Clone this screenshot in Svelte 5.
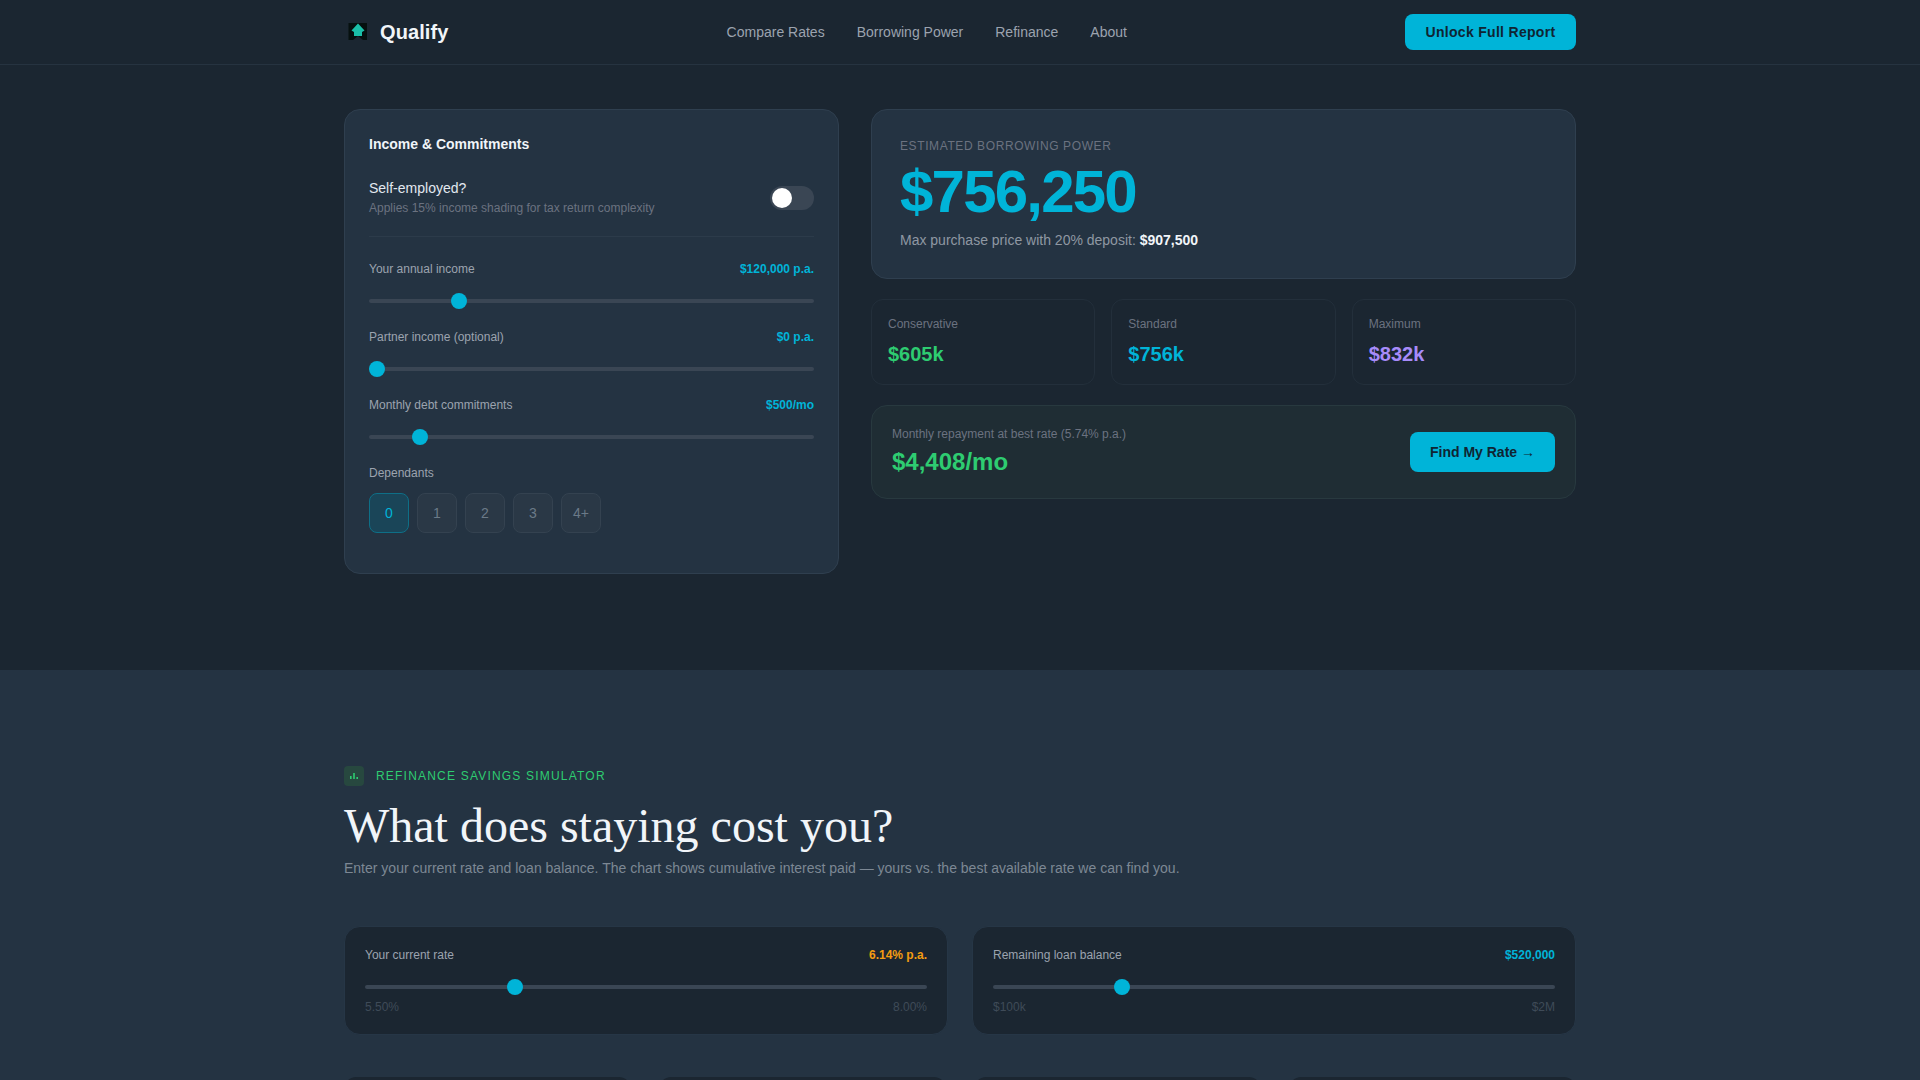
<script>
    let selfEmployed = $state(false);
    let income = $state(120000);
    let partner = $state(0);
    let debt = $state(500);
    let dependants = $state(0);
    let rate = $state(6.14);
    let balance = $state(520000);

    const money = (n) => "$" + Number(n).toLocaleString("en-US");
    const navLinks = ["Compare Rates", "Borrowing Power", "Refinance", "About"];
    const scenarios = [
        { label: "Conservative", value: "$605k", tone: "green" },
        { label: "Standard", value: "$756k", tone: "cyan" },
        { label: "Maximum", value: "$832k", tone: "purple" }
    ];
    const depOptions = ["0", "1", "2", "3", "4+"];
</script>

<div class="page">
    <header class="nav">
        <div class="nav-inner">
            <div class="logo">
                <svg width="28" height="28" viewBox="0 0 28 28">
                    <path d="M4.500 5H23v17h-4l-5-4-5 4H4.500z" fill="#06100f"/>
                    <path d="M14 5.500l6.500 7-2.500 1.500v4h-8v-4l-2.500-1.500z" fill="#1abfa8"/>
                </svg>
                <span>Qualify</span>
            </div>
            <nav class="links">
                {#each navLinks as link}
                    <a href="#top">{link}</a>
                {/each}
            </nav>
            <button class="btn nav-btn">Unlock Full Report</button>
        </div>
    </header>

    <section class="hero">
        <div class="hero-grid">
            <div class="card form-card">
                <h3>Income &amp; Commitments</h3>

                <div class="toggle-row">
                    <div>
                        <div class="toggle-title">Self-employed?</div>
                        <div class="toggle-sub">Applies 15% income shading for tax return complexity</div>
                    </div>
                    <button class="toggle" class:on={selfEmployed} aria-label="Self-employed" onclick={() => (selfEmployed = !selfEmployed)}>
                        <span class="knob"></span>
                    </button>
                </div>

                <div class="field">
                    <div class="field-head"><span>Your annual income</span><b>{money(income)} p.a.</b></div>
                    <input type="range" min="30000" max="500000" step="1000" bind:value={income} />
                </div>
                <div class="field">
                    <div class="field-head"><span>Partner income (optional)</span><b>{money(partner)} p.a.</b></div>
                    <input type="range" min="0" max="300000" step="1000" bind:value={partner} />
                </div>
                <div class="field">
                    <div class="field-head"><span>Monthly debt commitments</span><b>{money(debt)}/mo</b></div>
                    <input type="range" min="0" max="5000" step="50" bind:value={debt} />
                </div>

                <div class="dep-label">Dependants</div>
                <div class="dep-row">
                    {#each depOptions as opt, i}
                        <button class="dep" class:active={dependants === i} onclick={() => (dependants = i)}>{opt}</button>
                    {/each}
                </div>
            </div>

            <div class="results">
                <div class="card power-card">
                    <div class="power-label">ESTIMATED BORROWING POWER</div>
                    <div class="power-value">$756,250</div>
                    <div class="power-sub">Max purchase price with 20% deposit: <strong>$907,500</strong></div>
                </div>

                <div class="scenarios">
                    {#each scenarios as s}
                        <div class="scenario">
                            <div class="scenario-label">{s.label}</div>
                            <div class="scenario-value {s.tone}">{s.value}</div>
                        </div>
                    {/each}
                </div>

                <div class="repay">
                    <div>
                        <div class="repay-label">Monthly repayment at best rate (5.74% p.a.)</div>
                        <div class="repay-value">$4,408/mo</div>
                    </div>
                    <button class="btn repay-btn">Find My Rate →</button>
                </div>
            </div>
        </div>
    </section>

    <section class="refi">
        <div class="refi-inner">
            <div class="eyebrow">
                <span class="eyebrow-icon">
                    <svg width="10" height="10" viewBox="0 0 10 10" fill="#2ecc71">
                        <rect x="1" y="5" width="1.600" height="3"/>
                        <rect x="4.200" y="2" width="1.600" height="6"/>
                        <rect x="7.400" y="6" width="1.600" height="2"/>
                    </svg>
                </span>
                REFINANCE SAVINGS SIMULATOR
            </div>
            <h2>What does staying cost you?</h2>
            <p class="lede">Enter your current rate and loan balance. The chart shows cumulative interest paid — yours vs. the best available rate we can find you.</p>

            <div class="sim-grid">
                <div class="sim-card">
                    <div class="field-head"><span>Your current rate</span><b class="amber">{Number(rate).toFixed(2)}% p.a.</b></div>
                    <input type="range" min="5.5" max="8" step="0.05" value={rate} oninput={(e) => (rate = +e.currentTarget.value)} />
                    <div class="range-ends"><span>5.50%</span><span>8.00%</span></div>
                </div>
                <div class="sim-card">
                    <div class="field-head"><span>Remaining loan balance</span><b>{money(balance)}</b></div>
                    <input type="range" min="100000" max="2000000" step="10000" bind:value={balance} />
                    <div class="range-ends"><span>$100k</span><span>$2M</span></div>
                </div>
            </div>

            <div class="stat-grid">
                <div class="stat"></div>
                <div class="stat"></div>
                <div class="stat"></div>
                <div class="stat"></div>
            </div>
        </div>
    </section>
</div>

<style>
    :global(body) {
        margin: 0;
        background: #1b2631;
        font-family: "Liberation Sans", Arial, sans-serif;
    }

    .page {
        color: #f1f5f9;
    }

    .nav {
        height: 64px;
        border-bottom: 1px solid #263340;
        background: #1b2631;
    }

    .nav-inner {
        max-width: 1232px;
        height: 100%;
        margin: 0 auto;
        display: flex;
        align-items: center;
        justify-content: space-between;
    }

    .logo {
        display: flex;
        align-items: center;
        gap: 8px;
        font-size: 20px;
        font-weight: 700;
        letter-spacing: 0.1px;
        color: #f1f5f9;
    }

    .links {
        display: flex;
        gap: 32px;
    }

    .links a {
        font-size: 14px;
        color: #9ca3af;
        text-decoration: none;
    }

    .btn {
        border: none;
        background: #00b4d8;
        color: #0f2533;
        font-family: inherit;
        font-weight: 700;
        font-size: 14px;
        cursor: pointer;
        border-radius: 8px;
    }

    .nav-btn {
        width: 171px;
        height: 36px;
        letter-spacing: 0.3px;
    }

    .hero {
        padding: 44px 0 96px;
    }

    .hero-grid {
        max-width: 1232px;
        margin: 0 auto;
        display: grid;
        grid-template-columns: 495px 1fr;
        gap: 32px;
        align-items: start;
    }

    .card {
        background: #243342;
        border: 1px solid #2f3f4f;
        border-radius: 16px;
        box-sizing: border-box;
    }

    .form-card {
        padding: 24px;
        height: 465px;
    }

    h3 {
        margin: 0 0 25px;
        font-size: 14px;
        line-height: 20px;
        font-weight: 700;
        color: #f1f5f9;
    }

    .toggle-row {
        display: flex;
        align-items: center;
        justify-content: space-between;
        padding-bottom: 20px;
        margin-bottom: 24px;
        border-bottom: 1px solid #2c3b4a;
    }

    .toggle-title {
        font-size: 14px;
        line-height: 18px;
        color: #e2e8f0;
    }

    .toggle-sub {
        margin-top: 3px;
        font-size: 12px;
        line-height: 16px;
        color: #6b7280;
    }

    .toggle {
        position: relative;
        width: 44px;
        height: 24px;
        padding: 0;
        border: none;
        border-radius: 12px;
        background: #3a4654;
        cursor: pointer;
    }

    .toggle.on {
        background: #00b4d8;
    }

    .knob {
        position: absolute;
        top: 2px;
        left: 2px;
        width: 20px;
        height: 20px;
        border-radius: 50%;
        background: #fff;
    }

    .toggle.on .knob {
        left: 22px;
    }

    .field {
        margin-bottom: 20px;
    }

    .field-head {
        display: flex;
        justify-content: space-between;
        align-items: center;
        font-size: 12px;
        line-height: 16px;
        color: #9ca3af;
    }

    .field-head b {
        color: #00b4d8;
        font-weight: 700;
    }

    .field-head b.amber {
        color: #f39c12;
    }

    input[type="range"] {
        display: block;
        width: 100%;
        height: 16px;
        margin: 16px 0 0;
        appearance: none;
        -webkit-appearance: none;
        background: transparent;
        cursor: pointer;
    }

    input[type="range"]::-webkit-slider-runnable-track {
        height: 4px;
        border-radius: 2px;
        background: #3a4654;
    }

    input[type="range"]::-webkit-slider-thumb {
        -webkit-appearance: none;
        width: 16px;
        height: 16px;
        margin-top: -6px;
        border-radius: 50%;
        background: #00b4d8;
    }

    .dep-label {
        margin-bottom: 12px;
        font-size: 12px;
        line-height: 16px;
        color: #9ca3af;
    }

    .dep-row {
        display: flex;
        gap: 8px;
    }

    .dep {
        width: 40px;
        height: 40px;
        padding: 0;
        border: 1px solid #344250;
        border-radius: 8px;
        background: #2a3846;
        color: #6b7a88;
        font-family: inherit;
        font-size: 14px;
        cursor: pointer;
    }

    .dep.active {
        border-color: #0e6f87;
        background: #1a4558;
        color: #00b4d8;
    }

    .results {
        display: flex;
        flex-direction: column;
        gap: 20px;
    }

    .power-card {
        height: 170px;
        padding: 28px;
    }

    .power-label {
        font-size: 12px;
        line-height: 16px;
        letter-spacing: 0.6px;
        color: #6b7280;
    }

    .power-value {
        margin-top: 5px;
        font-size: 60px;
        line-height: 66px;
        font-weight: 700;
        letter-spacing: -0.03em;
        color: #00b4d8;
    }

    .power-sub {
        margin-top: 5px;
        font-size: 14px;
        line-height: 20px;
        color: #8f98a3;
    }

    .power-sub strong {
        color: #f1f5f9;
    }

    .scenarios {
        display: grid;
        grid-template-columns: repeat(3, 1fr);
        gap: 16px;
    }

    .scenario {
        height: 86px;
        box-sizing: border-box;
        padding: 16px;
        border: 1px solid #232f3b;
        border-radius: 12px;
        background: #1b2631;
    }

    .scenario-label {
        font-size: 12px;
        line-height: 16px;
        color: #6b7280;
    }

    .scenario-value {
        margin-top: 8px;
        font-size: 20px;
        line-height: 28px;
        font-weight: 700;
    }

    .green { color: #2ecc71; }
    .cyan { color: #00b4d8; }
    .purple { color: #a78bfa; }

    .repay {
        height: 94px;
        box-sizing: border-box;
        padding: 0 20px;
        display: flex;
        align-items: center;
        justify-content: space-between;
        border: 1px solid #28393f;
        border-radius: 16px;
        background: #1f2d34;
    }

    .repay-label {
        font-size: 12px;
        line-height: 16px;
        color: #6b7280;
    }

    .repay-value {
        margin-top: 4px;
        font-size: 24px;
        line-height: 32px;
        font-weight: 700;
        color: #2ecc71;
    }

    .repay-btn {
        width: 145px;
        height: 40px;
    }

    .refi {
        background: #243342;
        padding: 96px 0 64px;
    }

    .refi-inner {
        max-width: 1232px;
        margin: 0 auto;
    }

    .eyebrow {
        display: flex;
        align-items: center;
        gap: 12px;
        font-size: 12px;
        line-height: 20px;
        letter-spacing: 1.2px;
        color: #2ecc71;
    }

    .eyebrow-icon {
        width: 20px;
        height: 20px;
        display: flex;
        align-items: center;
        justify-content: center;
        border-radius: 4px;
        background: #27483f;
    }

    h2 {
        margin: 12px 0 4px;
        font-family: "Liberation Serif", "Times New Roman", serif;
        font-size: 48px;
        line-height: 56px;
        font-weight: 400;
        color: #f1f5f9;
    }

    .lede {
        margin: 0;
        font-size: 14px;
        line-height: 20px;
        color: #7d8894;
    }

    .sim-grid {
        margin-top: 48px;
        display: grid;
        grid-template-columns: 1fr 1fr;
        gap: 24px;
    }

    .sim-card {
        height: 109px;
        box-sizing: border-box;
        padding: 20px 20px 0;
        border: 1px solid #263646;
        border-radius: 16px;
        background: #1b2631;
    }

    .range-ends {
        margin-top: 4px;
        display: flex;
        justify-content: space-between;
        font-size: 12px;
        line-height: 16px;
        color: #3f4b58;
    }

    .stat-grid {
        margin-top: 42px;
        display: grid;
        grid-template-columns: repeat(4, 1fr);
        gap: 28px;
    }

    .stat {
        height: 120px;
        border-radius: 12px;
        background: #1b2631;
    }
</style>
